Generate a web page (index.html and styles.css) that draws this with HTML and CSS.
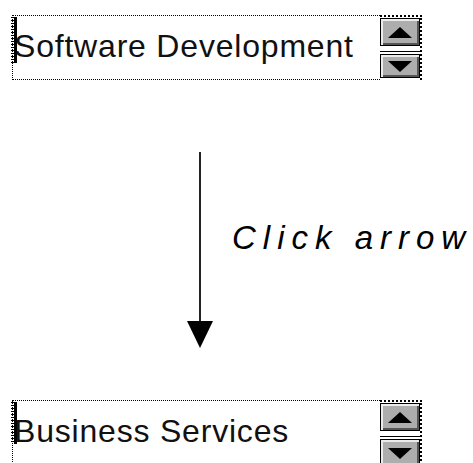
FILE: index.html
```html
<!DOCTYPE html>
<html lang="en">
<head>
    <meta charset="UTF-8">
    <title>Click arrow</title>
    <link rel="stylesheet" href="styles.css">
</head>
<body>
    <!-- Pole przed kliknięciem -->
    <div class="combo combo-top">
        <div class="field">
            <span class="caret"></span>
            <span class="value">Software Development</span>
        </div>
        <div class="spin">
            <div class="btn up"><span class="tri"></span></div>
            <div class="sep"></div>
            <div class="btn down"><span class="tri"></span></div>
        </div>
    </div>

    <!-- Strzałka z podpisem -->
    <div class="step">
        <div class="arrow">
            <div class="shaft"></div>
            <div class="head"></div>
        </div>
        <div class="caption">Click arrow</div>
    </div>

    <!-- Pole po kliknięciu -->
    <div class="combo combo-bottom">
        <div class="field">
            <span class="caret"></span>
            <span class="value">Business Services</span>
        </div>
        <div class="spin">
            <div class="btn up"><span class="tri"></span></div>
            <div class="sep"></div>
            <div class="btn down"><span class="tri"></span></div>
        </div>
    </div>
</body>
</html>
```

FILE: styles.css
```css
html, body {
    margin: 0;
    padding: 0;
    background-color: #fff;
    overflow: hidden;
}

body {
    width: 473px;
    height: 463px;
    font-family: "Liberation Sans", Arial, sans-serif;
    color: #000;
}

.combo {
    display: flex;
    width: 410px;
    margin-left: 12px;
}

.combo-top {
    margin-top: 15px;
    height: 65px;
}

.combo-bottom {
    margin-top: 52px;
    height: 80px;
}

.field {
    flex: 1;
    position: relative;
    display: flex;
    align-items: flex-start;
    border-top: 1px dotted #000;
    border-left: 1px dotted #000;
    border-bottom: 1px dotted #000;
}

.value {
    font-size: 32px;
    letter-spacing: 0.8px;
    line-height: 1;
    margin-top: 14px;
    margin-left: 1px;
    color: #111;
}

/* Kursor w polu */
.caret {
    position: absolute;
    left: -2px;
    top: 1px;
    width: 6px;
    height: 46px;
    background:
        linear-gradient(#000, #000) right / 3px 100% no-repeat,
        repeating-linear-gradient(#000 0 1px, transparent 1px 3px) left / 3px 100% no-repeat;
}

.combo-bottom .caret {
    top: 1px;
    height: 42px;
}

.spin {
    width: 40px;
    display: flex;
    flex-direction: column;
    border-top: 2px dotted #000;
    border-right: 2px dotted #000;
    padding-top: 1px;
}

.btn {
    height: 26px;
    border: 1px solid #000;
    background-color: #adadad;
    box-shadow: inset 2px 2px 0 #ececec, inset -2px -2px 0 #555;
    display: flex;
    align-items: center;
    justify-content: center;
}

.sep {
    height: 6px;
    border-bottom: 1px solid #000;
    margin-bottom: 2px;
    box-sizing: border-box;
}

.combo-top .btn.down {
    height: 22px;
}

.tri {
    width: 0;
    height: 0;
    border-left: 12px solid transparent;
    border-right: 12px solid transparent;
}

.up .tri {
    border-bottom: 11px solid #000;
}

.down .tri {
    border-top: 11px solid #000;
}

.step {
    display: flex;
    align-items: flex-start;
    margin-top: 72px;
    padding-left: 187px;
    gap: 19px;
}

.arrow {
    width: 26px;
    display: flex;
    flex-direction: column;
    align-items: center;
}

.shaft {
    width: 2px;
    height: 169px;
    background-color: #222;
}

.head {
    width: 0;
    height: 0;
    border-left: 13px solid transparent;
    border-right: 13px solid transparent;
    border-top: 27px solid #000;
}

.caption {
    font-style: italic;
    font-size: 33px;
    letter-spacing: 7px;
    line-height: 1;
    margin-top: 69px;
}
```
